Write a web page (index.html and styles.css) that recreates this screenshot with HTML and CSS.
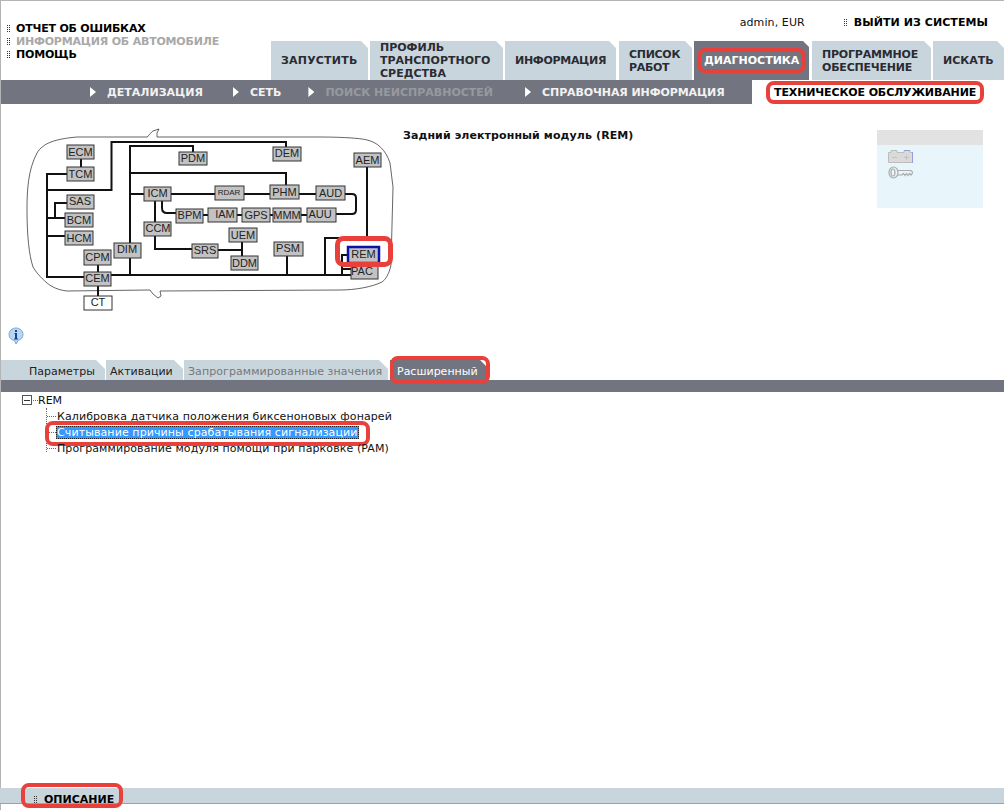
FILE: index.html
```html
<!DOCTYPE html>
<html lang="ru">
<head>
<meta charset="utf-8">
<title>Диагностика</title>
<link rel="stylesheet" href="styles.css">
</head>
<body>
<div class="page">
  <header class="header">
    <nav class="side-links">
      <a class="side-link"><i class="grip"></i>ОТЧЕТ ОБ ОШИБКАХ</a>
      <a class="side-link is-off"><i class="grip"></i>ИНФОРМАЦИЯ ОБ АВТОМОБИЛЕ</a>
      <a class="side-link"><i class="grip"></i>ПОМОЩЬ</a>
    </nav>
    <div class="header-right">
      <div class="user-row">
        <span class="user">admin, EUR</span>
        <a class="logout"><i class="grip"></i>ВЫЙТИ ИЗ СИСТЕМЫ</a>
      </div>
      <nav class="tabs">
        <a class="tab tab-run">ЗАПУСТИТЬ</a>
        <a class="tab tab-profile">ПРОФИЛЬ<br>ТРАНСПОРТНОГО<br>СРЕДСТВА</a>
        <a class="tab tab-info">ИНФОРМАЦИЯ</a>
        <a class="tab tab-list">СПИСОК<br>РАБОТ</a>
        <a class="tab tab-diag is-active"><span class="mark">ДИАГНОСТИКА</span></a>
        <a class="tab tab-soft">ПРОГРАММНОЕ<br>ОБЕСПЕЧЕНИЕ</a>
        <a class="tab tab-search">ИСКАТЬ</a>
      </nav>
    </div>
  </header>

  <nav class="subnav">
    <a class="sub-item"><i class="arrow"></i>ДЕТАЛИЗАЦИЯ</a>
    <a class="sub-item sub-net"><i class="arrow"></i>СЕТЬ</a>
    <a class="sub-item sub-fault is-off"><i class="arrow"></i>ПОИСК НЕИСПРАВНОСТЕЙ</a>
    <a class="sub-item sub-help"><i class="arrow"></i>СПРАВОЧНАЯ ИНФОРМАЦИЯ</a>
    <a class="sub-current"><span class="mark">ТЕХНИЧЕСКОЕ ОБСЛУЖИВАНИЕ</span></a>
  </nav>

  <section class="overview">
    <svg class="diagram" viewBox="1 120 399 200" width="399" height="200" role="img" aria-label="Схема модулей автомобиля">
      <path class="outline" d="M27 210 C27 190 28 170 37 153 C43 143 55 139 77 137 L147 137 C150 135 151 132 153 131 L159 129 L157 133 L157 137 L317 137 C340 137 360 138 367 140 C377 142 386 150 390 163 L393 187 L392 225 L391 265 C389 274 386 279 382 282 C372 287 355 290 340 290 L160 291 L161 296 L158 298 L153 294 L150 290 L67 291 C58 290 52 287 47 283 C40 277 36 272 33 267 C29 255 27 235 27 210 Z"/>
      <g class="wires">
        <path d="M81 159V167M67 174H47V277H84M47 190H111.500V142H286V147M47 218H65M55 218V203H67M47 236H65"/>
        <path d="M98 265V272M98 286V296M111 275H351M130 275V146H193V152M130 173H286V185M130 194H144M171 194H215M244 194H270M299 194H316"/>
        <path d="M155 201V249H192M162 201V208Q162 213 167 213H176M203 215H208M237 215H242M270 215H273M301 215H307"/>
        <path d="M218 250H242M242 242V256M287 256V275M367 167V238H325V275M348 255H342V275M342 269H351"/>
        <path d="M345 194H352Q356 194 356 198V210Q356 214 352 214H336"/>
      </g>
      <g class="modules">
        <rect x="67" y="145" width="27" height="14"/><text x="80.500" y="156">ECM</text>
        <rect x="67" y="167" width="27" height="14"/><text x="80.500" y="178">TCM</text>
        <rect x="67" y="195" width="27" height="14"/><text x="80" y="205">SAS</text>
        <rect x="65" y="213" width="28" height="14"/><text x="79" y="224">BCM</text>
        <rect x="65" y="231" width="28" height="14"/><text x="79" y="242">HCM</text>
        <rect x="84" y="250" width="27" height="15"/><text x="97.500" y="261">CPM</text>
        <rect x="84" y="272" width="27" height="14"/><text x="97.500" y="282">CEM</text>
        <rect class="plain" x="84" y="296" width="28" height="14"/><text x="98" y="306">CT</text>
        <rect x="114" y="243" width="27" height="15"/><text x="127" y="253">DIM</text>
        <rect x="144" y="187" width="27" height="14"/><text x="157.500" y="197">ICM</text>
        <rect x="144" y="222" width="27" height="14"/><text x="158" y="232">CCM</text>
        <rect x="176" y="209" width="27" height="14"/><text x="189.500" y="219">BPM</text>
        <rect x="179" y="152" width="28" height="13"/><text x="193" y="162">PDM</text>
        <rect x="192" y="244" width="26" height="14"/><text x="205" y="254">SRS</text>
        <rect x="273" y="147" width="28" height="14"/><text x="287" y="157">DEM</text>
        <rect x="354" y="153" width="27" height="14"/><text x="367.500" y="164">AEM</text>
        <rect x="215" y="186" width="29" height="14"/><text class="small" x="229" y="195">RDAR</text>
        <rect x="270" y="185" width="29" height="14"/><text x="284.500" y="196">PHM</text>
        <rect x="316" y="186" width="29" height="14"/><text x="330.500" y="197">AUD</text>
        <rect x="208" y="208" width="29" height="14"/><text x="225" y="218">IAM</text>
        <rect x="242" y="208" width="28" height="14"/><text x="256" y="219">GPS</text>
        <rect x="273" y="208" width="28" height="14"/><text x="287" y="219">MMM</text>
        <rect x="307" y="208" width="29" height="14"/><text x="320" y="218">AUU</text>
        <rect x="229" y="228" width="28" height="14"/><text x="243" y="239">UEM</text>
        <rect x="231" y="256" width="27" height="14"/><text x="244.500" y="267">DDM</text>
        <rect x="274" y="242" width="29" height="14"/><text x="288" y="252">PSM</text>
        <rect x="351" y="265" width="27" height="14"/><text x="362" y="275">PAC</text>
        <rect class="current" x="348" y="247" width="31" height="16"/><text x="363.500" y="258">REM</text>
      </g>
      <rect class="ring" x="337.500" y="238.500" width="53" height="26" rx="6"/>
    </svg>
    <h1 class="module-title">Задний электронный модуль (REM)</h1>
    <aside class="status-panel">
      <div class="status-head"></div>
      <div class="status-body">
        <svg class="status-icon" viewBox="0 0 25 13" width="25" height="13">
          <path class="ico-fill" d="M3 .500H9V2.500H16V.500H22V2.500H24.500V12.500H.500V2.500H3Z"/>
          <path class="ico-line" d="M4 7.500H9M16 7.500H21M18.500 5V10"/>
          <path class="ico-edge" d="M24.500 2V13M16 .5H22"/>
        </svg>
        <svg class="status-icon" viewBox="0 0 25 13" width="25" height="13">
          <path class="ico-line key" d="M10 4.500H23L25 6.500L23 9L21.500 7.500L20 9.500L18.500 7.500L17 9.500L15.500 7.500L14 9H10"/>
          <ellipse class="ico-line key" cx="5.500" cy="6.500" rx="4.500" ry="5.500"/>
          <ellipse class="ico-line key" cx="5" cy="6.500" rx="2" ry="3.500"/>
        </svg>
      </div>
    </aside>
  </section>

  <div class="info-row">
    <svg class="info-icon" viewBox="0 0 16 18" width="16" height="18">
      <path class="info-bubble" d="M8 1C12 1 15 4 15 7.500C15 11 12 13 10 13.500L8 17L6.500 13.500C3.500 13 1 11 1 7.500C1 4 4 1 8 1Z"/>
      <path class="info-glyph" d="M6.500 6H9V11.500H10V12.500H6V11.500H7V7H6.500ZM7 3H9V5H7Z"/>
    </svg>
  </div>

  <nav class="subtabs">
    <a class="subtab subtab-params">Параметры</a>
    <a class="subtab subtab-act">Активации</a>
    <a class="subtab subtab-prog is-off">Запрограммированные значения</a>
    <a class="subtab subtab-adv is-active"><span class="mark">Расширенный</span></a>
  </nav>
  <div class="subtabs-bar"></div>

  <main class="tree">
    <div class="tree-root"><i class="expander"></i><i class="stub"></i>REM</div>
    <ul class="tree-list">
      <li class="tree-item">Калибровка датчика положения биксеноновых фонарей</li>
      <li class="tree-item"><span class="selected mark">Считывание причины срабатывания сигнализации</span></li>
      <li class="tree-item">Программирование модуля помощи при парковке (PAM)</li>
    </ul>
  </main>

  <footer class="footer">
    <a class="footer-link mark"><i class="grip"></i>ОПИСАНИЕ</a>
  </footer>
</div>
</body>
</html>
```
FILE: styles.css
```css
* { box-sizing: border-box; }
html, body { margin: 0; height: 100%; overflow: hidden; background: #fff; }
body { font: 11px/13px "DejaVu Sans", Verdana, sans-serif; color: #222; }
a { color: inherit; text-decoration: none; }
i { display: block; flex: none; }
h1, ul { margin: 0; padding: 0; list-style: none; }

.page { height: 810px; display: flex; flex-direction: column; border-top: 1px solid #b4b4b4; border-left: 1px solid #b4b4b4; position: relative; }

.grip { width: 4px; height: 8px; background: conic-gradient(#333 25%, transparent 0) 0 0 / 2px 2px; }

.mark { position: relative; }
.mark::after { content: ""; position: absolute; border: 4px solid #e8403a; border-radius: 8px; pointer-events: none; }

.header { height: 79px; display: flex; justify-content: space-between; }
.side-links { padding: 21px 0 0 5px; display: flex; flex-direction: column; }
.side-link { display: flex; align-items: center; gap: 6px; height: 13px; font-weight: 700; color: #000; letter-spacing: -.2px; white-space: nowrap; }
.side-link.is-off { color: #a8a8a8; }

.header-right { display: flex; flex-direction: column; align-items: flex-end; justify-content: space-between; }
.user-row { display: flex; align-items: center; padding: 15px 16px 0 0; }
.user { margin-right: 38px; color: #111; letter-spacing: .1px; }
.logout { display: flex; align-items: center; gap: 7px; font-weight: 700; color: #000; letter-spacing: .07px; }

.tabs { display: flex; gap: 2px; height: 39px; }
.tab { display: flex; align-items: center; flex: none; padding: 0 0 0 10px; background: #c8d5dc; color: #2b2b33; font-weight: 700; line-height: 13px; clip-path: polygon(0 0, calc(100% - 7px) 0, 100% 7px, 100% 100%, 0 100%); }
.tab-run { width: 97px; letter-spacing: .2px; }
.tab-profile { width: 133px; }
.tab-info { width: 111px; letter-spacing: -.3px; }
.tab-list { width: 73px; margin-left: 1px; letter-spacing: -.3px; }
.tab-diag { width: 115px; }
.tab-soft { width: 119px; margin-left: 1px; letter-spacing: -.2px; }
.tab-search { width: 71px; }
.tab.is-active { background: #72757f; color: #fff; clip-path: polygon(0 0, calc(100% - 6px) 0, 100% 6px, 100% 100%, 0 100%); }
.tab .mark::after { inset: -6px -7px -6px -7px; }

.subnav { height: 24px; background: #72757f; display: flex; align-items: center; padding-left: 89px; color: #f2f2f2; font-weight: 700; white-space: nowrap; }
.sub-item { display: flex; align-items: center; flex: none; gap: 11px; margin-right: 30px; }
.sub-net { margin-right: 27px; }
.sub-fault { margin-right: 32px; }
.sub-help { margin-right: 0; letter-spacing: -.1px; }
.sub-item.is-off { color: #97999f; }
.arrow { width: 6px; height: 10px; background: #fff; clip-path: polygon(0 0, 100% 50%, 0 100%); }
.sub-current { margin-left: auto; flex: none; align-self: stretch; width: 252px; background: #fff; color: #000; display: flex; align-items: center; padding-left: 22px; letter-spacing: -.12px; }
.sub-current .mark::after { inset: -5px -8px -5px -8px; }

.overview { height: 200px; margin-top: 16px; display: flex; align-items: flex-start; }
.diagram { flex: none; display: block; }
.outline { fill: none; stroke: #222; stroke-width: .7; }
.wires path { fill: none; stroke: #111; stroke-width: 2; }
.modules rect { fill: #c2c2c2; stroke: #333; stroke-width: 1; }
.modules rect.plain { fill: #fff; }
.modules rect.current { stroke: #0a12a8; stroke-width: 2.500; }
.modules text { font: 11px "Liberation Sans", Arial, sans-serif; fill: #222; text-anchor: middle; }
.modules text.small { font-size: 8px; }
.ring { fill: none; stroke: #e8403a; stroke-width: 5; }
.module-title { width: 477px; padding: 9px 0 0 3px; font-size: 11px; line-height: 13px; font-weight: 700; color: #111; letter-spacing: .1px; }
.status-panel { width: 106px; height: 78px; margin-top: 10px; background: #e8f5fb; }
.status-head { height: 15px; background: #e2e2e2; }
.status-body { padding: 5px 0 0 11px; display: flex; flex-direction: column; gap: 3px; }
.status-icon { display: block; }
.ico-fill { fill: #dadada; stroke: #bdbdbd; stroke-width: 1; }
.ico-line { fill: none; stroke: #c2c2c2; stroke-width: 1; }
.ico-edge { fill: none; stroke: #9a9ad8; stroke-width: 1; }
.key { stroke: #aaa; stroke-width: 1.200; }

.info-row { height: 40px; padding: 7px 0 0 7px; }
.info-icon { display: block; }
.info-bubble { fill: #b9d6f2; stroke: #7ba6d8; stroke-width: 1; }
.info-glyph { fill: #1e3f8f; }

.subtabs { display: flex; gap: 1px; height: 20px; }
.subtab { display: flex; align-items: center; flex: none; padding: 2px 0 0 4px; background: #c8d5dc; color: #222; clip-path: polygon(0 0, calc(100% - 9px) 0, 100% 9px, 100% 100%, 0 100%); }
.subtab-params { width: 104px; padding-left: 28px; }
.subtab-act { width: 77px; }
.subtab-prog { width: 204px; letter-spacing: .07px; }
.subtab-adv { width: 98px; padding-left: 7px; margin-left: 1px; }
.subtab.is-off { color: #777; }
.subtab.is-active { background: #72757f; color: #fff; clip-path: none; position: relative; }
.subtab.is-active::before { content: ""; position: absolute; top: 0; right: 0; width: 8px; height: 8px; background: #fff; clip-path: polygon(0 0, 100% 0, 100% 100%); }
.subtab .mark::after { inset: -9px -12px -6px -7px; }
.subtabs-bar { height: 12px; background: #72757f; }

.tree { flex: 1; padding: 0 0 0 21px; }
.tree-root { display: flex; align-items: center; height: 16px; color: #111; }
.expander { width: 10px; height: 10px; margin-right: 1px; border: 1px solid #555; background: linear-gradient(#333, #333) center / 6px 1px no-repeat #fff; }
.stub { width: 5px; height: 1px; border-top: 1px dotted #666; }
.tree-list { margin-left: 24px; border-left: 1px dotted #666; height: 44px; }
.tree-item { display: flex; align-items: center; height: 16px; padding-left: 10px; color: #111; white-space: nowrap; position: relative; letter-spacing: .1px; }
.tree-item::before { content: ""; position: absolute; left: 0; top: 8px; width: 9px; border-top: 1px dotted #666; }
.selected { background: #3399ff; color: #fff; outline: 1px dotted #222; outline-offset: -1px; padding: 0 1px; margin-left: -1px; }
.selected.mark::after { inset: -5px -11px -7px -11px; }

.footer { height: 16px; margin: 0 0 6px -1px; background: #c8d5dc; border-bottom: 1px solid #9aa3a8; padding: 8px 0 0 33px; display: flex; align-items: center; }
.footer-link { display: flex; align-items: center; gap: 7px; font-weight: 700; color: #000; }
.footer-link.mark::after { inset: -10px -9px -2px -12px; }
```
